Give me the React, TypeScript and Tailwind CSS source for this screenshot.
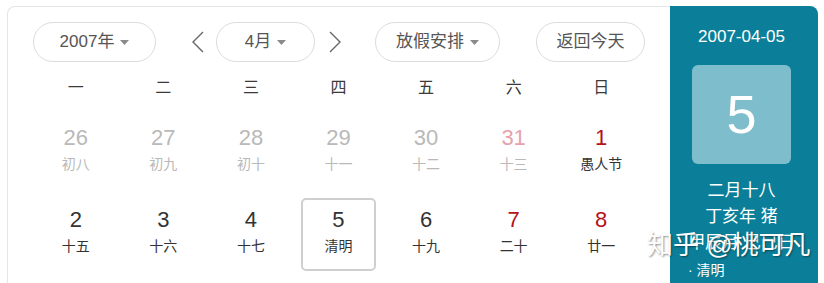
import React from "react";

type Day = {
  n: number;
  sub: string;
  tone: "prev" | "prevRed" | "cur" | "red";
  selected?: boolean;
};

const weekdays = ["一", "二", "三", "四", "五", "六", "日"];

const days: Day[] = [
  { n: 26, sub: "初八", tone: "prev" },
  { n: 27, sub: "初九", tone: "prev" },
  { n: 28, sub: "初十", tone: "prev" },
  { n: 29, sub: "十一", tone: "prev" },
  { n: 30, sub: "十二", tone: "prev" },
  { n: 31, sub: "十三", tone: "prevRed" },
  { n: 1, sub: "愚人节", tone: "red" },
  { n: 2, sub: "十五", tone: "cur" },
  { n: 3, sub: "十六", tone: "cur" },
  { n: 4, sub: "十七", tone: "cur" },
  { n: 5, sub: "清明", tone: "cur", selected: true },
  { n: 6, sub: "十九", tone: "cur" },
  { n: 7, sub: "二十", tone: "red" },
  { n: 8, sub: "廿一", tone: "red" },
];

function Caret() {
  return (
    <svg width="9" height="5" viewBox="0 0 9 5" className="ml-[6px] mt-[1px]">
      <path d="M0 0h9L4.5 5z" fill="#8a8a8a" />
    </svg>
  );
}

function Pill({ label, caret, className }: { label: string; caret?: boolean; className: string }) {
  return (
    <button
      className={`flex h-[40px] items-center justify-center rounded-full border border-[#dcdcdc] bg-white text-[17px] text-[#555] ${className}`}
    >
      {label}
      {caret && <Caret />}
    </button>
  );
}

function Chevron({ dir, className }: { dir: "left" | "right"; className: string }) {
  return (
    <svg width="12" height="22" viewBox="0 0 12 22" className={className}>
      <polyline
        points={dir === "left" ? "11,1 1,11 11,21" : "1,1 11,11 1,21"}
        fill="none"
        stroke="#666"
        strokeWidth="1.4"
      />
    </svg>
  );
}

function DayCell({ day }: { day: Day }) {
  const numColor =
    day.tone === "prev"
      ? "text-[#b9b9b9]"
      : day.tone === "prevRed"
        ? "text-[#e6a2ac]"
        : day.tone === "red"
          ? "text-[#b5121b]"
          : "text-[#333]";
  const subColor = day.tone === "prev" || day.tone === "prevRed" ? "text-[#b9b9b9]" : "text-[#333]";
  return (
    <div className="flex items-center justify-center">
      <div
        className={`flex h-[73px] w-[75px] flex-col items-center justify-center rounded-[5px] border-2 pb-[5px] ${
          day.selected ? "border-[#cfcfcf]" : "border-transparent"
        }`}
      >
        <span className={`text-[22px] leading-[24px] ${numColor}`}>{day.n}</span>
        <span className={`mt-[5px] text-[14px] leading-[18px] ${subColor}`}>{day.sub}</span>
      </div>
    </div>
  );
}

export default function App() {
  return (
    <div
      className="relative h-[283px] w-[824px] overflow-hidden bg-white"
      style={{ fontFamily: '"Liberation Sans", Arial, "Noto Sans CJK SC", sans-serif' }}
    >
      <div className="flex pl-[7px] pt-[6px]">
        <div className="h-[300px] w-[663px] rounded-tl-[8px] border border-r-0 border-[#e6e6e6] pl-[24px] pt-[15px]">
          <div className="flex items-center">
            <Pill label="2007年" caret className="ml-px w-[123px]" />
            <Chevron dir="left" className="ml-[36px]" />
            <Pill label="4月" caret className="ml-[12px] w-[99px]" />
            <Chevron dir="right" className="ml-[14px]" />
            <Pill label="放假安排" caret className="ml-[34px] w-[125px]" />
            <Pill label="返回今天" className="ml-[36px] w-[109px]" />
          </div>
          <div className="mt-[6px] grid h-[40px] w-[613px] grid-cols-7 items-center">
            {weekdays.map((w) => (
              <div key={w} className="text-center text-[16px] text-[#3a3a3a]">
                {w}
              </div>
            ))}
          </div>
          <div className="mt-[3px] grid w-[613px] auto-rows-[82px] grid-cols-7">
            {days.map((d) => (
              <DayCell key={`${d.n}-${d.sub}`} day={d} />
            ))}
          </div>
        </div>
        <div className="h-[300px] w-[148px] rounded-tr-[8px] bg-[#0b7f99] pt-[19px] text-white">
          <div className="w-[143px] text-center text-[17px] leading-[24px]">2007-04-05</div>
          <div className="ml-[22px] mt-[16px] flex h-[99px] w-[99px] items-center justify-center rounded-[6px] bg-[#7ebdcc] text-[54px]">
            5
          </div>
          <div className="mt-[14px] w-[143px] text-center text-[17px] leading-[26px]">
            <div>二月十八</div>
            <div>丁亥年 猪</div>
            <div>甲辰月 己巳日</div>
          </div>
          <div className="mt-[4px] pl-[18px] text-[14px] leading-[20px]">· 清明</div>
        </div>
      </div>
      <div className="absolute left-[647px] top-[229px] text-[26px] leading-[32px] text-white [text-shadow:1px_1px_2px_rgba(0,0,0,0.45)]">
        知乎 @桃可凡
      </div>
    </div>
  );
}
